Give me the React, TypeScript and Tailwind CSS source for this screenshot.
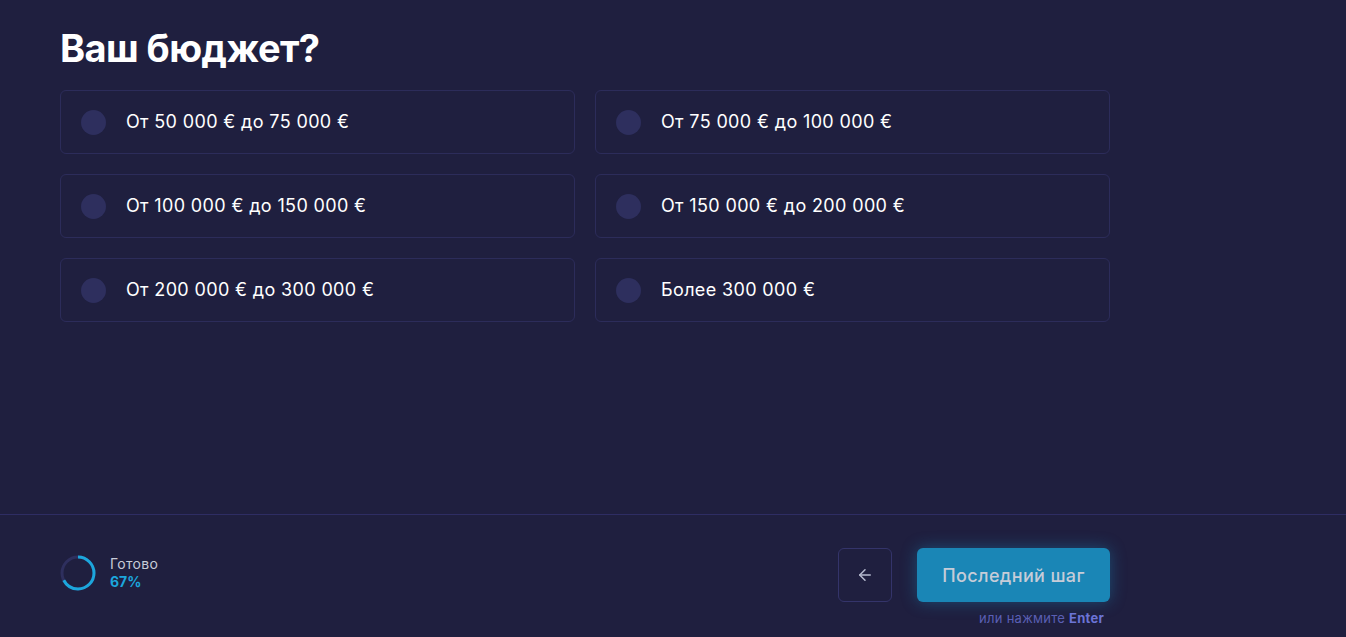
import { ArrowLeft } from 'lucide-react';

const options = [
  'От 50 000 € до 75 000 €',
  'От 75 000 € до 100 000 €',
  'От 100 000 € до 150 000 €',
  'От 150 000 € до 200 000 €',
  'От 200 000 € до 300 000 €',
  'Более 300 000 €',
];

function ProgressRing({ value }: { value: number }) {
  const r = 16;
  const c = 2 * Math.PI * r;
  return (
    <svg width="36" height="36" viewBox="0 0 36 36" className="-rotate-90">
      <circle cx="18" cy="18" r={r} fill="none" stroke="#2e2f5e" strokeWidth="3" />
      <circle
        cx="18"
        cy="18"
        r={r}
        fill="none"
        stroke="#1ca6dc"
        strokeWidth="3"
        strokeDasharray={`${(c * value) / 100} ${c}`}
      />
    </svg>
  );
}

export default function App() {
  return (
    <div
      className="w-full h-[637px] bg-[#1f1f3f] flex flex-col text-white"
      style={{ fontFamily: 'Inter, "Noto Sans", sans-serif' }}
    >
      {/* Вопрос */}
      <div className="flex-1 px-[60px] pt-[26px]">
        <div className="w-[1050px]">
          <h1 className="text-[38px] font-bold leading-[44px] tracking-[-0.015em]">Ваш бюджет?</h1>
          <div className="grid grid-cols-2 gap-5 mt-5">
            {options.map((o) => (
              <label
                key={o}
                className="h-16 flex items-center gap-[20px] pl-[20px] border border-[#2c2c5a] rounded-md cursor-pointer"
              >
                <span className="w-[25px] h-[25px] rounded-full bg-[#2e2f5e]" />
                <span className="text-[18px] leading-6 tracking-[0.02em]">{o}</span>
              </label>
            ))}
          </div>
        </div>
      </div>

      {/* Футер */}
      <div className="h-[123px] border-t border-[#2e2d63] px-[60px] pt-[33px]">
        <div className="w-[1050px] flex items-start justify-between">
          <div className="flex items-center gap-[14px] mt-[7px]">
            <ProgressRing value={67} />
            <div className="leading-[18px]">
              <div className="text-[14px] text-[#c8ccd8] tracking-[0.02em]">Готово</div>
              <div className="text-[14px] font-bold text-[#1ca6dc]">67%</div>
            </div>
          </div>
          <div className="flex items-start gap-[25px]">
            <button className="w-[54px] h-[54px] border border-[#34346a] rounded-md flex items-center justify-center text-[#b7bbd0]">
              <ArrowLeft size={18} />
            </button>
            <div className="flex flex-col items-end">
              <button className="w-[193px] h-[54px] rounded-md bg-[#1a86b6] text-[#c6ccd8] text-[18px] font-medium tracking-[0.02em] shadow-[0_0_16px_rgba(26,134,182,0.45)]">
                Последний шаг
              </button>
              <div className="text-[13px] leading-4 text-[#5a5fb4] mt-[8px] mr-[6px] tracking-[0.02em]">
                или нажмите <span className="font-bold text-[#6b74d6]">Enter</span>
              </div>
            </div>
          </div>
        </div>
      </div>
    </div>
  );
}
